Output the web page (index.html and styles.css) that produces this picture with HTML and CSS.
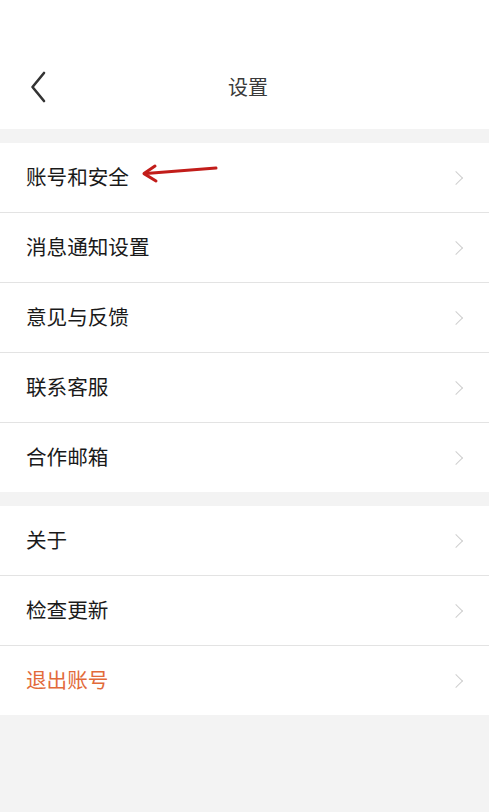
FILE: index.html
```html
<!DOCTYPE html>
<html lang="zh">
<head>
<meta charset="utf-8">
<title>设置</title>
<link rel="stylesheet" href="styles.css">
</head>
<body>
<div class="page">
  <header class="header">
    <svg class="back" width="20" height="32" viewBox="0 0 20 32"><path d="M15 2 L3.5 16 L15 30" fill="none" stroke="#333" stroke-width="2.6" stroke-linecap="round" stroke-linejoin="round"/></svg>
    <div class="title">设置</div>
  </header>
  <div class="gap"></div>
  <ul class="group">
    <li class="row"><span class="label">账号和安全</span>
      <svg class="arrow" width="82" height="22" viewBox="0 0 82 22"><path d="M7 10.5 L77 5" fill="none" stroke="#c21d1a" stroke-width="3" stroke-linecap="round"/><path d="M16 3 L5 10.6 L17 18" fill="none" stroke="#c21d1a" stroke-width="3" stroke-linecap="round" stroke-linejoin="round"/></svg>
      <span class="chev"></span></li>
    <li class="row"><span class="label">消息通知设置</span><span class="chev"></span></li>
    <li class="row"><span class="label">意见与反馈</span><span class="chev"></span></li>
    <li class="row"><span class="label">联系客服</span><span class="chev"></span></li>
    <li class="row"><span class="label">合作邮箱</span><span class="chev"></span></li>
  </ul>
  <div class="gap"></div>
  <ul class="group">
    <li class="row"><span class="label">关于</span><span class="chev"></span></li>
    <li class="row"><span class="label">检查更新</span><span class="chev"></span></li>
    <li class="row"><span class="label logout">退出账号</span><span class="chev"></span></li>
  </ul>
</div>
</body>
</html>
```
FILE: styles.css
```css
* { box-sizing: border-box; }
html, body { margin: 0; padding: 0; }
body {
  background: #f3f3f3;
  font-family: "Noto Sans CJK SC", "Noto Sans", sans-serif;
  width: 489px;
  height: 812px;
  overflow: hidden;
}
.header {
  height: 129px;
  background: #fff;
  position: relative;
  display: flex;
  align-items: center;
  justify-content: center;
  padding: 66px 0 21px 7px;
}
.back {
  position: absolute;
  left: 29px;
  top: 71px;
}
.title {
  font-size: 20px;
  color: #3a3a3a;
  line-height: 28px;
}
.gap { height: 14px; }
.group {
  list-style: none;
  margin: 0;
  padding: 0;
  background: #fff;
}
.row {
  height: 70px;
  display: flex;
  align-items: center;
  padding: 0 24px 3px 26px;
  border-bottom: 1px solid #e3e3e3;
  position: relative;
}
.row:last-child { border-bottom: none; height: 69px; }
.label {
  font-size: 20.6px;
  color: #1a1a1a;
  line-height: 28px;
  flex: 1;
}
.logout { color: #e26a3a; }
.arrow {
  position: absolute;
  left: 139px;
  top: 20px;
}
.chev {
  width: 10px;
  height: 10px;
  border-top: 1.6px solid #cfcfcf;
  border-right: 1.6px solid #cfcfcf;
  transform: rotate(45deg);
  margin: 3px 4px 0 0;
}
```
